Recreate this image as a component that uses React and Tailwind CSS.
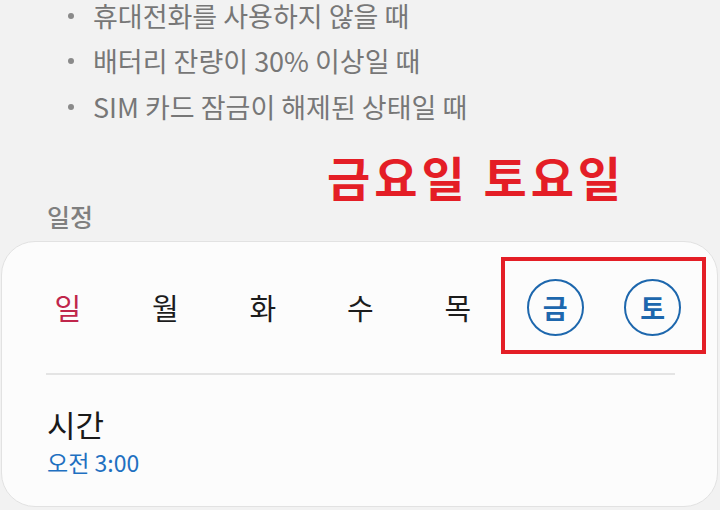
const days = [
  { label: '일', tone: 'sun' },
  { label: '월' },
  { label: '화' },
  { label: '수' },
  { label: '목' },
  { label: '금', selected: true },
  { label: '토', selected: true },
];

const conditions = [
  '휴대전화를 사용하지 않을 때',
  '배터리 잔량이 30% 이상일 때',
  'SIM 카드 잠금이 해제된 상태일 때',
];

const font = { fontFamily: '"Noto Sans CJK KR", "Noto Sans", sans-serif' };

const DayCell = ({ day }) => {
  if (day.selected) {
    return (
      <div className="w-[97.5px] flex justify-center">
        <div className="w-[57px] h-[57px] rounded-full border-2 border-[#1d67ad] flex items-center justify-center text-[27px] font-bold text-[#1d67ad] leading-none">
          {day.label}
        </div>
      </div>
    );
  }
  return (
    <div
      className={`w-[97.5px] flex justify-center text-[29px] leading-none ${
        day.tone === 'sun' ? 'text-[#c0264b]' : 'text-[#1c1c1c]'
      }`}
    >
      {day.label}
    </div>
  );
};

const App = () => {
  return (
    <div className="w-[720px] h-[510px] overflow-hidden bg-[#f2f2f2]" style={font}>
      {/* first row is partly scrolled off in the reference */}
      <ul className="pl-[68px] h-[130px]">
        {conditions.map((text, i) => (
          <li
            key={text}
            className={`flex items-center text-[27px] leading-[30px] text-[#777777] ${i === 0 ? 'h-[31px]' : 'h-[46px]'} ${i === 1 ? 'mt-[7px]' : ''}`}
          >
            <span className="w-[6px] h-[6px] rounded-full bg-[#8a8a8a] mr-[19px]" />
            {text}
          </li>
        ))}
      </ul>

      <div className="pl-[327px] mt-[17px] h-[56px] flex items-center text-[47px] font-bold text-[#e41e26] leading-none tracking-[4px]">
        금요일 토요일
      </div>

      <div className="pl-[47px] mt-[2px] h-[24px] flex items-center text-[25px] font-medium text-[#7f7f7f]">
        일정
      </div>

      <div className="relative mt-[12px] ml-[1px] w-[717px] h-[266px] bg-[#fcfcfc] border border-[#e2e2e2] rounded-[34px]">
        <div className="flex items-center pl-[17px] h-[131px]">
          {days.map((d) => (
            <DayCell key={d.label} day={d} />
          ))}
        </div>

        <div className="ml-[44px] mr-[42px] h-[2px] bg-[#e4e4e4]" />

        <div className="pl-[45px] pt-[31px]">
          <div className="text-[31px] leading-[36px] text-[#1a1a1a]">시간</div>
          <div className="text-[23px] leading-[28px] mt-[6px] text-[#1f70c1]">오전 3:00</div>
        </div>

        <div className="absolute left-[499px] top-[15px] w-[205px] h-[97px] border-[4px] border-[#e41e26]" />
      </div>
    </div>
  );
};

export default App;
